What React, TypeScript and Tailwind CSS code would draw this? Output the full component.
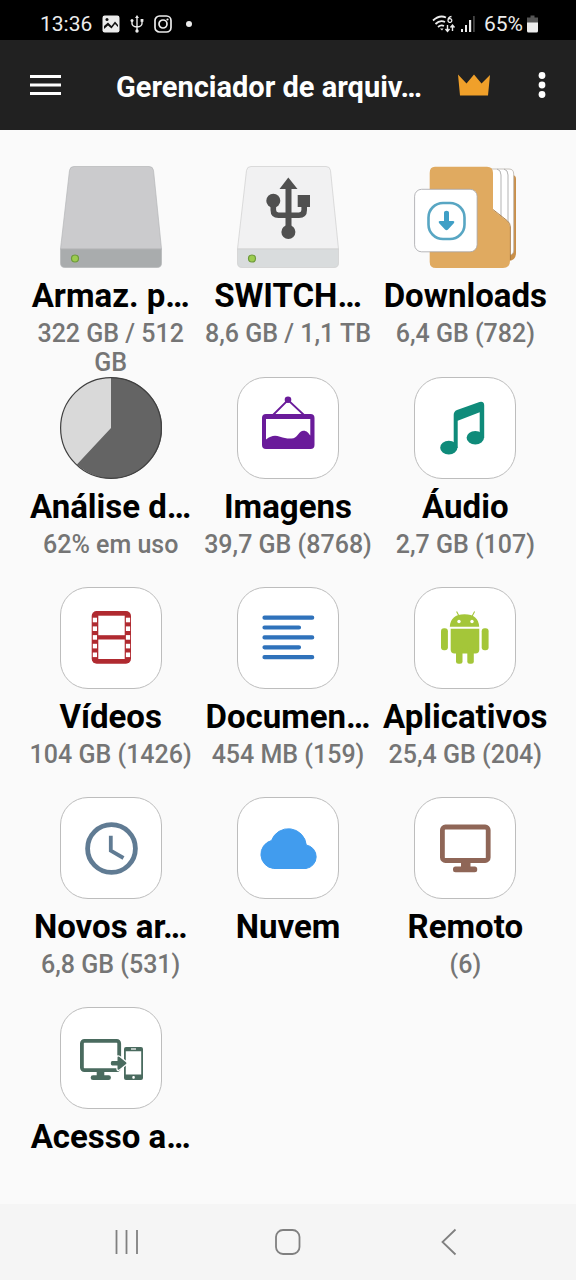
import React from "react";

// ---- TYPES ----//
type Item = {
  id: string;
  name: string;
  info?: string;
  icon: React.ReactNode;
  tile?: boolean;
};
// ---- TYPES ----//

//// ------------- Drive and folder drawings ----------------//
const Drive = ({ top, front, line }: { top: string; front: string; line: string }) => (
  <>
    <path
      d="M14 .5H89Q93 .5 93.500 4.500L101.500 83H.5L9.500 4.500Q10 .5 14 .5Z"
      fill={top}
      stroke={line}
      strokeWidth="0.7"
    />
    <path
      d="M.5 83H101.500V97Q101.500 101.500 97 101.500H5Q.5 101.500 .5 97Z"
      fill={front}
      stroke={line}
      strokeWidth="0.7"
    />
    <circle cx="15" cy="92.500" r="3.500" fill="#9ccc4f" stroke="#6d9a3a" strokeWidth="1.200" />
  </>
);

const InternalIcon = () => <Drive top="#cbcbcd" front="#a9acad" line="#b4b6b7" />;

const UsbIcon = () => (
  <>
    <Drive top="#f1f1f2" front="#d9dcdd" line="#cfcfcf" />
    <g fill="#505050">
      <path d="M51.300 11.500L60.500 23H42.500Z" />
      <rect x="48.500" y="20" width="6" height="44" />
      <circle cx="51.400" cy="66" r="7" />
      <circle cx="36.300" cy="34.700" r="7" />
      <rect x="60.700" y="29" width="12.300" height="12" />
    </g>
    <path
      d="M36.300 36V44Q36.300 49.200 41.500 49.200H62Q67.200 49.200 67.200 44V38"
      fill="none"
      stroke="#505050"
      strokeWidth="5.600"
    />
  </>
);

const DownloadsIcon = () => (
  <>
    <path d="M80 9H98Q102 9 102 13V87Q102 94 95 95H80Z" fill="#c98f49" />
    <path d="M76 3H95Q99.700 3 99.700 8V84Q99.700 89 95 89H76Z" fill="#fff" stroke="#b9b3ab" strokeWidth="0.8" />
    <path d="M83 3Q87 4 87 9V60M90 3Q94 4 94 9V60" fill="none" stroke="#aaa" strokeWidth="0.9" />
    <path
      d="M21 .7H73Q79 .7 79 7V44L93 55Q96 57.500 96 61V95Q96 102 89 102H22Q15.700 102 15.700 96V7Q15.700 .7 21 .7Z"
      fill="#e0aa60"
    />
    <path d="M79 43.500L93 54.500Q96.400 57 96.400 61V94" fill="none" stroke="#a9783d" strokeWidth="0.9" />
    <rect x="0.600" y="23.300" width="62.500" height="62.500" rx="7" fill="#fff" stroke="#a5a5a8" strokeWidth="0.8" />
    <rect x="14.500" y="37" width="36" height="36" rx="14.500" fill="#fff" stroke="#58a6c3" strokeWidth="2.600" />
    <path
      d="M30 46.500Q30 44.700 32.500 44.700T35 46.500V55H39Q41.200 55.300 39.800 57.200L34 63.500Q32.500 64.900 31 63.500L25.200 57.200Q23.800 55.300 26 55H30Z"
      fill="#3f9fc6"
    />
  </>
);

const UsagePie = () => (
  <>
    <circle cx="51" cy="51" r="50.500" fill="#d9d9d9" />
    <path d="M51 51V.5A50.500 50.500 0 1 1 16.900 87.500Z" fill="#646464" />
    <circle cx="51" cy="51" r="50.400" fill="none" stroke="#404040" strokeWidth="1.200" />
  </>
);

//// ------------- Category drawings ----------------//
const ImagesIcon = () => (
  <g fill="#6a1b9a">
    <path d="M36 38L51 23L67 38" fill="none" stroke="#6a1b9a" strokeWidth="1.800" />
    <circle cx="51" cy="22.700" r="3.300" />
    <path
      fillRule="evenodd"
      d="M29 37H73.500Q77.500 37 77.500 41V68Q77.500 72 73.500 72H29Q25 72 25 68V41Q25 37 29 37ZM29 42V62.500C34 58.500 38 58 43 59.700C48 61.400 52 62 56.500 61.200C61 60 62 53.700 66.500 53.700C70 53.700 71.500 56 73.300 58.500V42Z"
    />
  </g>
);

const AudioIcon = () => (
  <g fill="#0f8b7a">
    <ellipse cx="34.800" cy="70.700" rx="8.600" ry="6.900" />
    <ellipse cx="61.300" cy="60.700" rx="8.700" ry="6.800" />
    <path d="M39.700 71V38Q39.700 34.300 43 33L65.500 25Q70.200 23.900 70.200 28.500V61H65.700V35.300L43.700 43.700V71Z" />
  </g>
);

const perforations = [30.7, 39.4, 48.1, 56.8, 65.5];

const VideosIcon = () => (
  <>
    <rect x="31.700" y="24" width="39.300" height="52.700" rx="5" fill="#b02a30" />
    <rect x="38.300" y="28.700" width="26.400" height="19.500" fill="#fff" />
    <rect x="38.300" y="52.500" width="26.400" height="19.500" fill="#fff" />
    {perforations.map((y) => (
      <g key={y} fill="#fff">
        <rect x="32.800" y={y} width="4.200" height="4.600" />
        <rect x="65.900" y={y} width="4.200" height="4.600" />
      </g>
    ))}
  </>
);

const DocumentsIcon = () => (
  <path
    d="M27.500 30.700H75.200M27.500 40.500H62M27.500 50.400H75.200M27.500 60.300H62M27.500 70.200H75.200"
    stroke="#2f72bb"
    strokeWidth="4.200"
    strokeLinecap="round"
  />
);

const AppsIcon = () => (
  <g fill="#a4c639">
    <path d="M35.800 39.700Q36.500 27.200 50.500 27.200T65.200 39.700Z" />
    <path d="M42.600 24.500L45.500 30M60.600 24.500L57.700 30" stroke="#a4c639" strokeWidth="1.100" />
    <circle cx="45" cy="34.500" r="1.700" fill="#fff" />
    <circle cx="58" cy="34.500" r="1.700" fill="#fff" />
    <path d="M36.700 41.700H65.300V62.500Q65.300 66.500 61.500 66.500H40.500Q36.700 66.500 36.700 62.500Z" />
    <rect x="27" y="41.200" width="6.900" height="22" rx="3" />
    <rect x="67.700" y="41.200" width="6.900" height="22" rx="3" />
    <rect x="42" y="60" width="6.500" height="16.700" rx="2.500" />
    <rect x="53.300" y="60" width="6.500" height="16.700" rx="2.500" />
  </g>
);

const RecentIcon = () => (
  <g fill="none" stroke="#607b93">
    <circle cx="51.500" cy="51.500" r="23.900" strokeWidth="4.800" />
    <path d="M50.800 38.700V53.700L63.500 61" strokeWidth="3.800" />
  </g>
);

const CloudIcon = () => (
  <path
    d="M36.500 71.500A14.300 14.300 0 0 1 34.500 43.500A18 18 0 0 1 69.300 48A11.900 11.900 0 0 1 69 71.500Z"
    fill="#419cee"
    stroke="#419cee"
  />
);

const RemoteIcon = () => (
  <>
    <rect x="28.400" y="30" width="45.800" height="33.500" rx="3" fill="none" stroke="#8f6657" strokeWidth="4.800" />
    <rect x="47" y="64.500" width="9.500" height="7" fill="#8f6657" />
    <rect x="39" y="69.500" width="24.200" height="5.700" rx="2.500" fill="#8f6657" />
  </>
);

const AccessIcon = () => (
  <g fill="#4a6b5f">
    <rect x="21.900" y="33.900" width="37.300" height="29.200" rx="2.500" fill="none" stroke="#4a6b5f" strokeWidth="3.800" />
    <rect x="36.700" y="64" width="7.600" height="6" />
    <rect x="30.700" y="68.300" width="20.200" height="4.700" rx="2.300" />
    <path
      fillRule="evenodd"
      d="M66 40H81Q83 40 83 42V71Q83 73 81 73H66Q64 73 64 71V42Q64 40 66 40ZM65.800 44.200V67.500H81.200V44.200Z"
    />
    <path d="M71 42H76" stroke="#fff" strokeWidth="1.200" />
    <rect x="72.300" y="69" width="2.500" height="2.700" rx="1" fill="#fff" />
    <path
      d="M52.300 54H57.500V50.500Q57.500 48.700 59.200 49.800L66 55.200Q67 56.100 66 57L59.200 62.500Q57.500 63.500 57.500 61.700V58.500H52.300Q50.800 58.500 50.800 56.300T52.300 54Z"
      stroke="#fff"
      strokeWidth="2.400"
      paintOrder="stroke"
    />
  </g>
);

const items: Item[] = [
  { id: "internal", name: "Armaz. p…", info: "322 GB / 512 GB", icon: <InternalIcon /> },
  { id: "usb", name: "SWITCH…", info: "8,6 GB / 1,1 TB", icon: <UsbIcon /> },
  { id: "downloads", name: "Downloads", info: "6,4 GB (782)", icon: <DownloadsIcon /> },
  { id: "usage", name: "Análise d…", info: "62% em uso", icon: <UsagePie /> },
  { id: "images", name: "Imagens", info: "39,7 GB (8768)", icon: <ImagesIcon />, tile: true },
  { id: "audio", name: "Áudio", info: "2,7 GB (107)", icon: <AudioIcon />, tile: true },
  { id: "videos", name: "Vídeos", info: "104 GB (1426)", icon: <VideosIcon />, tile: true },
  { id: "documents", name: "Documen…", info: "454 MB (159)", icon: <DocumentsIcon />, tile: true },
  { id: "apps", name: "Aplicativos", info: "25,4 GB (204)", icon: <AppsIcon />, tile: true },
  { id: "recent", name: "Novos ar…", info: "6,8 GB (531)", icon: <RecentIcon />, tile: true },
  { id: "cloud", name: "Nuvem", icon: <CloudIcon />, tile: true },
  { id: "remote", name: "Remoto", info: "(6)", icon: <RemoteIcon />, tile: true },
  { id: "access", name: "Acesso a…", icon: <AccessIcon />, tile: true },
];

const StatusBar = () => (
  <div className="flex h-10 items-center justify-between bg-black pt-2 pr-[38px] pl-10 text-[21px] leading-8 text-[#ececec]">
    <div className="flex items-center gap-[10px]">
      <span>13:36</span>
      <svg className="h-[18px] w-[18px]" viewBox="0 0 18 18">
        <rect x="0.500" y="0.500" width="17" height="17" rx="2.200" fill="#ececec" />
        <path d="M2 11L6 7.500L9.500 11L13 6.500L16 10V12L13 9L9.500 13.500L6 10.500L2 14Z" fill="#111" />
        <circle cx="5" cy="4.500" r="1.500" fill="#111" />
      </svg>
      <svg className="h-[18px] w-[14px]" viewBox="0 0 14 18" fill="none" stroke="#ececec" strokeWidth="1.400">
        <path d="M7 2V16M2 5V8.500Q2 11.500 7 12Q12 11.500 12 8.500V5" />
        <path d="M7 0L9 3H5Z" fill="#ececec" stroke="none" />
        <circle cx="2" cy="5.500" r="1.500" fill="#ececec" stroke="none" />
        <rect x="10.600" y="4" width="2.800" height="2.800" fill="#ececec" stroke="none" />
        <circle cx="7" cy="16" r="1.700" fill="#ececec" stroke="none" />
      </svg>
      <svg className="h-[18px] w-[18px]" viewBox="0 0 18 18" fill="none" stroke="#ececec" strokeWidth="1.700">
        <rect x="1" y="1" width="16" height="16" rx="4.500" />
        <circle cx="9" cy="9" r="4" />
        <circle cx="13.500" cy="4.500" r="1.100" fill="#ececec" stroke="none" />
      </svg>
      <span className="ml-1 h-[6px] w-[6px] rounded-full bg-[#ececec]" />
    </div>
    <div className="flex items-center">
      <svg className="mr-1 h-[18px] w-6" viewBox="0 0 24 18" fill="none" stroke="#ececec" strokeWidth="1.800">
        <path d="M1 5.500Q7.500 -.5 14 2.500M3.500 9Q8 4.500 13 7M6 12Q9 9.500 12 11" />
        <path d="M19.500 1.500Q16 2 16 5.500A1.900 1.900 0 1 0 16.300 4.500" strokeWidth="1.300" />
        <path d="M8 13.500L10 15.500L11.500 13.500Z" fill="#ececec" stroke="none" />
        <path d="M15.500 10V16M13.500 14L15.500 16.500L17.500 14M20.500 16V10M18.500 12.500L20.500 10L22.500 12.500" strokeWidth="1.400" />
      </svg>
      <svg className="mr-2 h-[18px] w-4" viewBox="0 0 16 18" fill="#ececec">
        <rect x="1" y="14" width="2" height="3" />
        <rect x="5" y="10" width="2" height="7" />
        <rect x="9" y="5" width="2.200" height="12" />
        <rect x="13" y="1" width="1.800" height="16" fill="#444" />
      </svg>
      <span>65%</span>
      <svg className="ml-1 h-[18px] w-[11px]" viewBox="0 0 11 18">
        <path d="M3.500 .5H7.500V2.500H11V8H0V2.500H3.500Z" fill="#555" />
        <path d="M0 7.500H11V16Q11 17.500 9.500 17.500H1.500Q0 17.500 0 16Z" fill="#ececec" />
      </svg>
    </div>
  </div>
);

const Header = () => (
  <header className="flex h-[90px] items-center bg-[#212121] pr-6 pl-[30px] text-white">
    <button type="button" aria-label="Menu" className="mr-[55px]">
      <svg className="h-6 w-[31px]" viewBox="0 0 31 24" fill="#fff">
        <rect y="2" width="31" height="3" />
        <rect y="10.500" width="31" height="3" />
        <rect y="19" width="31" height="3" />
      </svg>
    </button>
    <h1 className="flex-1 pt-1 text-[29px] leading-9 font-bold whitespace-nowrap">Gerenciador de arquiv…</h1>
    <button type="button" aria-label="Premium" className="mr-[41px]">
      <svg className="h-6 w-[34px]" viewBox="0 0 34 24">
        <path d="M1 1.500L9.500 10.500L17 1.500L24.500 10.500L33 2L31 22.500H3Z" fill="#f0a02a" />
      </svg>
    </button>
    <button type="button" aria-label="Mais opções">
      <svg className="h-7 w-5" viewBox="0 0 20 28" fill="#fff">
        <circle cx="10" cy="4.500" r="3.400" />
        <circle cx="10" cy="14" r="3.400" />
        <circle cx="10" cy="23.500" r="3.400" />
      </svg>
    </button>
  </header>
);

const GridItem = ({ item }: { item: Item }) => (
  <button type="button" className="flex min-h-[210px] flex-col items-center last:min-h-0">
    {item.tile ? (
      <span className="h-[102px] w-[102px] rounded-[28px] border border-[#bdbdbd] bg-white">
        <svg className="h-full w-full" viewBox="1 1 100 100">
          {item.icon}
        </svg>
      </span>
    ) : (
      <svg className="h-[102px] w-[102px]" viewBox="0 0 102 102">
        {item.icon}
      </svg>
    )}
    <span className="mt-2 text-[33px] leading-[39px] font-bold whitespace-nowrap text-black">{item.name}</span>
    {item.info && <span className="mt-1 text-[25px] leading-[29px] font-medium text-[#757575]">{item.info}</span>}
  </button>
);

const NavBar = () => (
  <nav className="grid h-[76px] grid-cols-3 items-center justify-items-center bg-[#f5f5f5] px-[46px]">
    <button type="button" aria-label="Recentes">
      <svg className="h-7 w-7" viewBox="0 0 28 28" stroke="#808080" strokeWidth="1.800">
        <path d="M3.500 2V26M13.500 2V26M24 2V26" />
      </svg>
    </button>
    <button type="button" aria-label="Início">
      <svg className="h-7 w-7" viewBox="0 0 28 28" fill="none" stroke="#808080" strokeWidth="1.800">
        <rect x="2" y="2" width="23.500" height="24" rx="7" />
      </svg>
    </button>
    <button type="button" aria-label="Voltar">
      <svg className="h-7 w-7" viewBox="0 0 28 28" fill="none" stroke="#808080" strokeWidth="1.800">
        <path d="M20.500 1.500L7.500 14L20.500 26.500" />
      </svg>
    </button>
  </nav>
);

const App = () => {
  return (
    <div className="flex min-h-screen flex-col bg-[#fafafa] font-['Roboto',sans-serif]">
      <StatusBar />
      <Header />
      <main className="grid flex-1 grid-cols-3 content-start px-[22px] pt-9">
        {items.map((item) => (
          <GridItem key={item.id} item={item} />
        ))}
      </main>
      <NavBar />
    </div>
  );
};

export default App;
